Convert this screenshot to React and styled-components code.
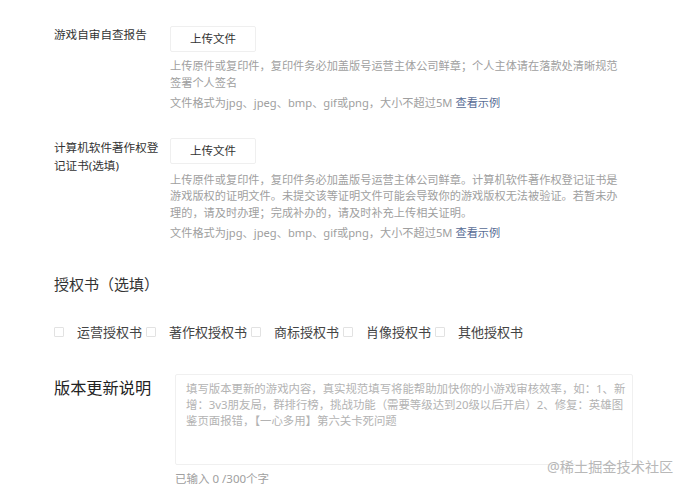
import React from "react";
import styled, { createGlobalStyle } from "styled-components";

const Global = createGlobalStyle`
  html, body { margin: 0; padding: 0; background: #fff; }
  body { font-family: "Noto Sans", "Noto Sans CJK SC", sans-serif; color: #333; }
  * { box-sizing: border-box; }
`;

const Page = styled.div`
  position: relative;
  width: 692px;
  height: 492px;
  padding: 26px 0 0 54px;
  overflow: hidden;
`;

const Field = styled.div`
  display: grid;
  grid-template-columns: 116px 1fr;
  align-items: start;
  margin-top: ${(p) => p.$mt || 0}px;
`;

const FieldLabel = styled.div`
  width: 108px;
  font-size: 11.6px;
  line-height: 18px;
  color: #333;
  margin-top: ${(p) => p.$mt || 0}px;
  word-break: break-all;
`;

const Upload = styled.button`
  display: block;
  width: 86px;
  height: 26px;
  padding: 0;
  border: 1px solid #efefef;
  border-radius: 2px;
  background: #fff;
  color: #333;
  font-family: inherit;
  font-size: 11.5px;
  line-height: 24px;
  text-align: center;
  cursor: pointer;
`;

const Desc = styled.p`
  width: 454px;
  margin: ${(p) => p.$mt}px 0 0;
  font-size: 11.2px;
  line-height: ${(p) => p.$lh}px;
  color: #a0a0a0;
`;

const Format = styled.p`
  margin: 3px 0 0;
  font-size: 11.2px;
  line-height: 18px;
  color: #a0a0a0;
`;

const Link = styled.a`
  color: #576b95;
  text-decoration: none;
  margin-left: 3px;
`;

const Heading = styled.h3`
  margin: 30px 0 0;
  font-size: 15px;
  line-height: 24px;
  font-weight: 400;
  color: #333;
`;

const CheckRow = styled.div`
  display: flex;
  align-items: center;
  margin-top: 26.5px;
  height: 20px;
`;

const CheckItem = styled.label`
  display: flex;
  align-items: center;
  margin-right: 4px;
  font-size: 13px;
  line-height: 20px;
  color: #444;
  cursor: pointer;
`;

const Box = styled.span`
  width: 10px;
  height: 10px;
  border: 1px solid #e2e2e2;
  border-radius: 1px;
  background: #fff;
  margin-right: 13px;
  flex: none;
`;

const NoteField = styled.div`
  display: grid;
  grid-template-columns: 121px 1fr;
  align-items: start;
  margin-top: 32px;
`;

const NoteLabel = styled.div`
  font-size: 16.2px;
  line-height: 24px;
  margin-top: 1.5px;
  color: #222;
`;

const NoteArea = styled.textarea`
  display: block;
  width: 458px;
  height: 91px;
  padding: 6px 2px 6px 10px;
  border: 1px solid #f0f0f0;
  border-radius: 2px;
  resize: none;
  outline: none;
  font-family: "Noto Sans", "Noto Sans CJK SC", sans-serif;
  font-size: 11.4px;
  line-height: 16px;
  color: #333;
  &::placeholder { color: #b3b3b3; }
`;

const Counter = styled.div`
  margin-top: 5px;
  font-size: 11.5px;
  line-height: 18px;
  color: #a0a0a0;
`;

const Watermark = styled.div`
  position: absolute;
  left: 547px;
  top: 457px;
  font-size: 14.2px;
  line-height: 20px;
  color: #b8b8b8;
  white-space: nowrap;
`;

const certs = ["运营授权书", "著作权授权书", "商标授权书", "肖像授权书", "其他授权书"];

export default function App() {
  return (
    <>
      <Global />
      <Page>
        <Field>
          <FieldLabel $mt={0}>游戏自审自查报告</FieldLabel>
          <div>
            <Upload>上传文件</Upload>
            <Desc $mt={6} $lh={16.5}>
              上传原件或复印件，复印件务必加盖版号运营主体公司鲜章；个人主体请在落款处清晰规范签署个人签名
            </Desc>
            <Format>
              文件格式为jpg、jpeg、bmp、gif或png，大小不超过5M<Link href="#">查看示例</Link>
            </Format>
          </div>
        </Field>
        <Field $mt={26}>
          <FieldLabel $mt={1}>计算机软件著作权登记证书(选填)</FieldLabel>
          <div>
            <Upload>上传文件</Upload>
            <Desc $mt={8} $lh={16.25}>
              上传原件或复印件，复印件务必加盖版号运营主体公司鲜章。计算机软件著作权登记证书是游戏版权的证明文件。未提交该等证明文件可能会导致你的游戏版权无法被验证。若暂未办理的，请及时办理；完成补办的，请及时补充上传相关证明。
            </Desc>
            <Format>
              文件格式为jpg、jpeg、bmp、gif或png，大小不超过5M<Link href="#">查看示例</Link>
            </Format>
          </div>
        </Field>
        <Heading>授权书（选填）</Heading>
        <CheckRow>
          {certs.map((c) => (
            <CheckItem key={c}>
              <Box />
              {c}
            </CheckItem>
          ))}
        </CheckRow>
        <NoteField>
          <NoteLabel>版本更新说明</NoteLabel>
          <div>
            <NoteArea placeholder="填写版本更新的游戏内容，真实规范填写将能帮助加快你的小游戏审核效率，如：1、新增：3v3朋友局，群排行榜，挑战功能（需要等级达到20级以后开启）2、修复：英雄图鉴页面报错，【一心多用】第六关卡死问题" />
            <Counter>已输入 0 /300个字</Counter>
          </div>
        </NoteField>
        <Watermark>@稀土掘金技术社区</Watermark>
      </Page>
    </>
  );
}
